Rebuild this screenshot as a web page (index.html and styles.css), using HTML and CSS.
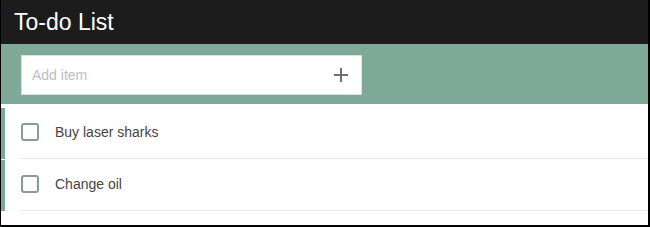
FILE: index.html
```html
<!DOCTYPE html>
<html lang="en">
  <head>
    <meta charset="UTF-8" />
    <meta name="viewport" content="width=device-width, initial-scale=1.0" />
    <title>To-do List</title>
    <link rel="stylesheet" href="styles.css">
  </head>
  <body>
    <div class="app">
      <header class="title-bar">
        <h1>To-do List</h1>
      </header>

      <div class="add-bar">
        <form class="add-box">
          <input type="text" class="add-input" placeholder="Add item" />
          <button type="button" class="add-btn" title="Add">
            <svg width="14" height="14" viewBox="0 0 14 14">
              <path d="M7 0v14M0 7h14" stroke="#6f6f6f" stroke-width="2" fill="none" />
            </svg>
          </button>
        </form>
      </div>

      <ul class="todo-list">
        <li class="todo-item">
          <div class="todo-body">
            <span class="check"></span>
            <span class="todo-text">Buy laser sharks</span>
          </div>
        </li>
        <li class="todo-item">
          <div class="todo-body">
            <span class="check"></span>
            <span class="todo-text">Change oil</span>
          </div>
        </li>
      </ul>
    </div>
  </body>
</html>
```

FILE: styles.css
```css
* {
  box-sizing: border-box;
}

html, body {
  margin: 0px;
  padding: 0px;
  background-color: #000;
}

.app {
  width: 650px;
  height: 227px;
  background-color: #fff;
  border-left: 1px solid #000;
  border-right: 2px solid #000;
  border-bottom: 2px solid #000;
  font-family: "Liberation Sans", Arial, sans-serif;
  overflow: hidden;
}

.title-bar {
  background-color: #1c1c1c;
  height: 44px;
  padding: 8px 0px 0px 13px;
}

h1 {
  margin: 0px;
  color: #fff;
  font-weight: normal;
  font-size: 23px;
  line-height: 28px;
}

.add-bar {
  background-color: #7ea898;
  height: 60px;
  padding: 11px 0px 0px 20px;
}

.add-box {
  display: flex;
  align-items: center;
  width: 341px;
  height: 40px;
  margin: 0px;
  background-color: #fff;
  border: 1px solid #d3e2dc;
}

.add-input {
  flex: 1;
  border: 0px;
  outline: none;
  padding: 0px 0px 0px 10px;
  font-family: inherit;
  font-size: 14px;
  color: #444;
  background: transparent;
}

.add-input::placeholder {
  color: #bdbdbd;
}

.add-btn {
  border: 0px;
  background: transparent;
  padding: 0px;
  margin-right: 13px;
  width: 14px;
  height: 14px;
  display: flex;
}

.todo-list {
  list-style: none;
  margin: 4px 0px 0px 0px;
  padding: 0px;
}

.todo-item {
  border-left: 4px solid #7ea898;
  margin-bottom: 1px;
  padding-left: 15px;
}

.todo-body {
  display: flex;
  align-items: center;
  height: 51px;
  padding-bottom: 2px;
  border-bottom: 1px solid #ebebeb;
  padding-left: 1px;
}

.check {
  width: 18px;
  height: 18px;
  border: 2px solid #82a096;
  border-radius: 3px;
  margin-right: 16px;
}

.todo-text {
  font-size: 14px;
  color: #444;
}
```
